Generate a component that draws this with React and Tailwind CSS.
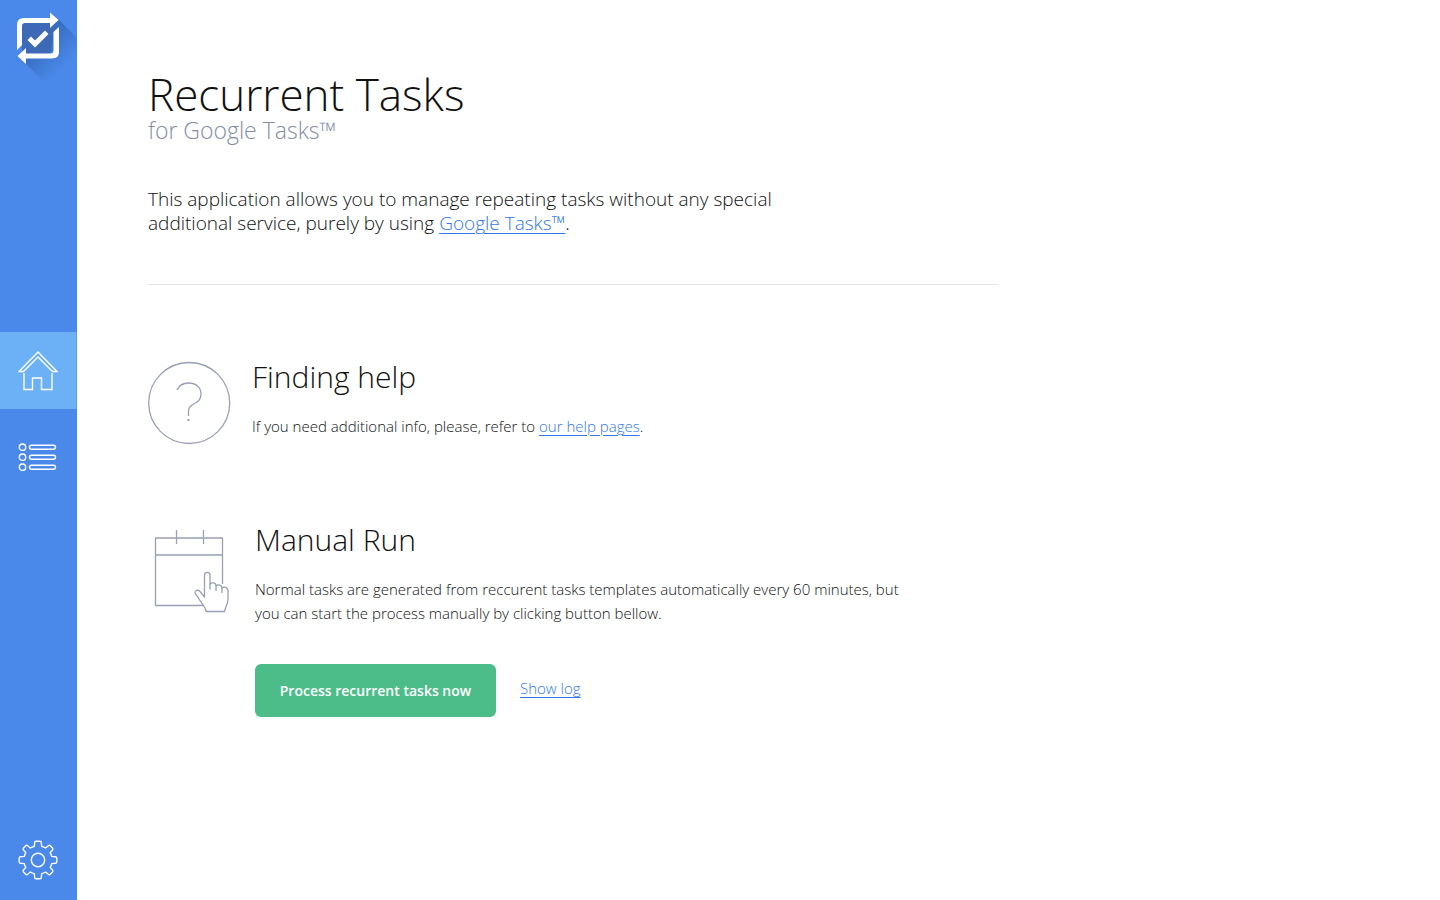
const linkClass = "text-[#2f78ea] underline decoration-1 underline-offset-3";

function Logo() {
  return (
    <svg className="h-20 w-full" viewBox="0 0 77 80" fill="none" aria-hidden="true">
      <defs>
        <linearGradient id="logo-shadow" gradientUnits="userSpaceOnUse" x1="38" y1="38" x2="66" y2="66">
          <stop offset="0" stopColor="#2f5fae" stopOpacity="0.75" />
          <stop offset="1" stopColor="#2f5fae" stopOpacity="0" />
        </linearGradient>
      </defs>
      <path d="M59 20L77 38V80H42L26 64V50L50 26Z" fill="url(#logo-shadow)" />
      <path d="M22 23H54V32L50 54H22V44Z" fill="#3d69b6" />
      <path d="M17 50V25Q17 18 24 18H50V12.500L58.500 20L50 28V23H25Q22 23 22 26V45Z" fill="#fff" />
      <path d="M59 27V52Q59 58.500 52 58.500H26V64L17.500 56L26 48V53.500H50.500Q53.500 53.500 53.500 50.500V32Z" fill="#fff" />
      <path d="M27.500 40L31 36.500L35 40.500L45 30.500L48.500 34L35 47.500Z" fill="#fff" />
    </svg>
  );
}

function HomeIcon() {
  return (
    <svg className="h-10 w-10" viewBox="0 0 40 40" fill="none" stroke="#fff" strokeWidth="1.400" aria-hidden="true">
      <path d="M20 1L39 20.500H34.500L20 6L5.500 20.500H1Z" />
      <path d="M6 22V38.500H14.500V27H23.500V38.500H34V22" />
    </svg>
  );
}

function ListIcon() {
  return (
    <svg className="h-10 w-10" viewBox="0 0 40 40" fill="none" stroke="#fff" strokeWidth="1.400" aria-hidden="true">
      {[9, 19, 29].map((y) => (
        <g key={y}>
          <circle cx="4.500" cy={y + 0.2} r="3.200" />
          <rect x="11.500" y={y - 1.8} width="26" height="4" rx="2" />
        </g>
      ))}
    </svg>
  );
}

function GearIcon() {
  return (
    <svg className="h-10 w-10" viewBox="0 0 40 40" fill="none" stroke="#fff" strokeWidth="1.400" strokeLinejoin="round" aria-hidden="true">
      <path d="M18 1.200H22Q23.300 1.200 23.300 2.500L23.700 6.300Q25.800 6.900 27.600 8L30.300 5.700Q31.300 4.900 32.300 5.800L34.500 8Q35.300 9 34.500 10L32.200 12.600Q33.200 14.300 33.700 16.400L37.500 16.800Q38.800 17 38.800 18.200V21.800Q38.800 23 37.500 23.200L33.700 23.600Q33.200 25.700 32.200 27.400L34.500 30Q35.300 31 34.500 32L32.300 34.200Q31.300 35.100 30.300 34.300L27.600 32Q25.800 33.100 23.700 33.700L23.300 37.500Q23.300 38.800 22 38.800H18Q16.700 38.800 16.700 37.500L16.300 33.700Q14.200 33.100 12.400 32L9.700 34.300Q8.700 35.100 7.700 34.200L5.500 32Q4.700 31 5.500 30L7.800 27.400Q6.800 25.700 6.300 23.600L2.500 23.200Q1.200 23 1.200 21.800V18.200Q1.200 17 2.500 16.800L6.300 16.400Q6.800 14.300 7.800 12.600L5.500 10Q4.700 9 5.500 8L7.700 5.800Q8.700 4.900 9.700 5.700L12.400 8Q14.200 6.900 16.300 6.300L16.700 2.500Q16.700 1.200 18 1.200Z" />
      <circle cx="20" cy="20" r="6.700" />
    </svg>
  );
}

function HelpIcon() {
  return (
    <svg className="h-21 w-21 shrink-0" viewBox="1 0 84 84" fill="none" stroke="#99a0b4" strokeWidth="1.300" aria-hidden="true">
      <circle cx="42.200" cy="42" r="40.500" />
      <path d="M30 29C32 24.500 36 22 41.500 22C49 22 54 26.500 54 33C54 44.500 41.500 41 41.500 50V55" />
      <rect x="40.500" y="58" width="2" height="2" fill="#99a0b4" stroke="none" />
    </svg>
  );
}

function CalendarIcon() {
  return (
    <svg className="h-[90px] w-[83px] shrink-0" viewBox="1 -5 83 90" fill="none" stroke="#99a0b4" strokeWidth="1.300" strokeLinejoin="round" aria-hidden="true">
      <path d="M75.500 55V9H8.500V76.500H56M8.500 26H75.500M29.500 1V15M56.500 1V15" />
      <path
        fill="#fff"
        d="M59 82.500C58.500 77 54 74 52 70C51 67.500 48 65.500 48 63.500C48 61 51 60.500 53 62.500L57.500 68V46C57.500 42.500 63 42.500 63 46V55C65 53 69 53.500 69 57C71 55 75 56 75 59C77.500 57 81 58.500 81 61.500V71C80.500 75 78.500 78 77.500 82.500Z"
      />
      <path d="M63 55V60.500M69 57V62M75 59V64" />
    </svg>
  );
}

export default function App() {
  return (
    <div className="flex min-h-screen bg-white font-['Open_Sans','Noto_Sans',sans-serif] font-light text-[#111111]">
      <aside className="flex w-[77px] shrink-0 flex-col bg-[#4a89ea]">
        <a href="#top" aria-label="Recurrent Tasks">
          <Logo />
        </a>
        <nav className="mt-[252px] flex flex-col gap-2.5">
          <a href="#home" aria-label="Home" aria-current="page" className="flex h-[77px] items-center justify-center border-r border-[#5b9bee] bg-[#6cb0f5]">
            <HomeIcon />
          </a>
          <a href="#tasks" aria-label="Tasks" className="flex h-[77px] items-center justify-center pr-0.5">
            <ListIcon />
          </a>
        </nav>
        <a href="#settings" aria-label="Settings" className="mt-auto flex h-20 items-center justify-center pr-0.5">
          <GearIcon />
        </a>
      </aside>

      <main className="grow px-[71px] pt-[70px]">
        <div className="max-w-[850px]">
          <header>
            <h1 className="text-[44px] leading-[48px]">Recurrent Tasks</h1>
            <p className="text-[23px] leading-6 text-[#858da5]">for Google Tasks™</p>
          </header>
          <p className="mt-[45px] max-w-[660px] text-[19px] leading-6">
            This application allows you to manage repeating tasks without any special additional service, purely by using{" "}
            <a href="#google-tasks" className={linkClass}>Google Tasks™</a>.
          </p>
          <hr className="mt-[49px] border-[#e6e6e6]" />

          <section className="mt-[76px] flex gap-5">
            <HelpIcon />
            <div>
              <h2 className="text-3xl leading-8">Finding help</h2>
              <p className="mt-[21px] text-[15px] leading-6">
                If you need additional info, please, refer to{" "}
                <a href="#help" className={linkClass}>our help pages</a>.
              </p>
            </div>
          </section>

          <section className="mt-[79px] flex gap-6">
            <CalendarIcon />
            <div className="max-w-[660px]">
              <h2 className="text-3xl leading-8">Manual Run</h2>
              <p className="mt-[21px] text-[15px] leading-6">
                Normal tasks are generated from reccurent tasks templates automatically every 60 minutes, but you can start the process manually by clicking button bellow.
              </p>
              <div className="mt-[39px] flex items-center gap-6">
                <button type="button" className="h-[53px] w-[241px] rounded-md bg-[#4cbd88] text-sm font-semibold text-white">
                  Process recurrent tasks now
                </button>
                <a href="#log" className={`pb-1 text-[15px] ${linkClass}`}>Show log</a>
              </div>
            </div>
          </section>
        </div>
      </main>
    </div>
  );
}
